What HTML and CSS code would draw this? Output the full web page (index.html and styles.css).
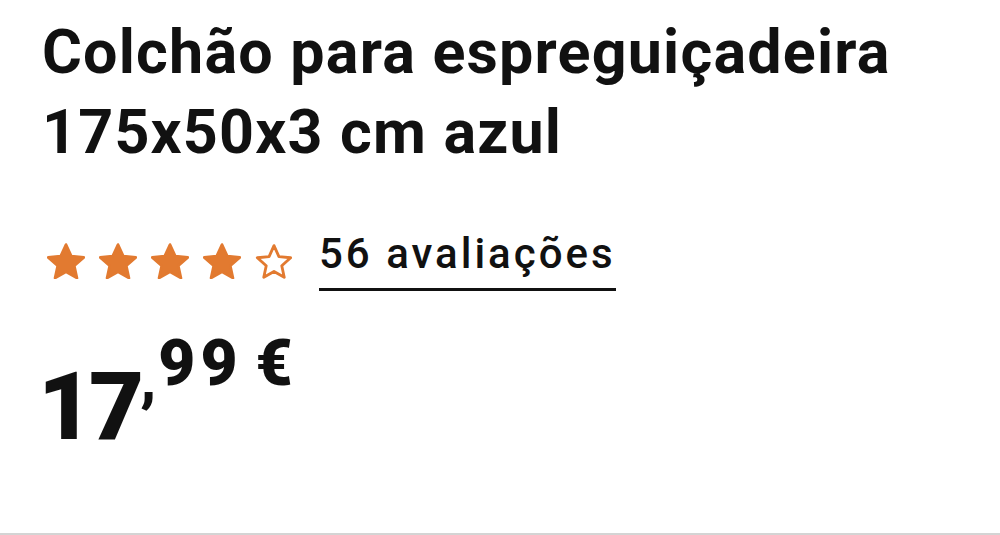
FILE: index.html
```html
<!DOCTYPE html>
<html lang="pt">
<head>
    <meta charset="UTF-8">
    <meta name="viewport" content="width=device-width, initial-scale=1.0">
    <title>Colchão para espreguiçadeira</title>
    <link rel="stylesheet" href="styles.css">
</head>
<body>
    <div class="product">
        <h1 class="title">Colchão para espreguiçadeira 175x50x3 cm azul</h1>

        <div class="rating">
            <div class="stars">
                <svg class="star" viewBox="2 2 20 19"><path class="full" d="M12 2.8l2.8 6.1 6.6.7-5 4.4 1.4 6.5L12 17.2l-5.8 3.3 1.4-6.5-5-4.4 6.6-.7z"/></svg>
                <svg class="star" viewBox="2 2 20 19"><path class="full" d="M12 2.8l2.8 6.1 6.6.7-5 4.4 1.4 6.5L12 17.2l-5.8 3.3 1.4-6.5-5-4.4 6.6-.7z"/></svg>
                <svg class="star" viewBox="2 2 20 19"><path class="full" d="M12 2.8l2.8 6.1 6.6.7-5 4.4 1.4 6.5L12 17.2l-5.8 3.3 1.4-6.5-5-4.4 6.6-.7z"/></svg>
                <svg class="star" viewBox="2 2 20 19"><path class="full" d="M12 2.8l2.8 6.1 6.6.7-5 4.4 1.4 6.5L12 17.2l-5.8 3.3 1.4-6.5-5-4.4 6.6-.7z"/></svg>
                <svg class="star" viewBox="2 2 20 19"><path class="empty" d="M12 3.4l2.6 5.8 6.2.6-4.7 4.2 1.3 6.1L12 17l-5.4 3.1 1.3-6.1-4.7-4.2 6.2-.6z"/></svg>
            </div>
            <a class="reviews" href="#">56 avaliações</a>
        </div>

        <div class="price">17<span class="sep">,</span><span class="cents">99 €</span></div>
    </div>
</body>
</html>
```

FILE: styles.css
```css
* {
    margin: 0;
    padding: 0;
    box-sizing: border-box;
}
body {
    background: #fff;
    color: #111;
    font-family: 'Roboto', 'Liberation Sans', sans-serif;
}
.product {
    height: 535px;
    padding: 12px 42px 0;
    border-bottom: 2px solid #d4d4d4;
}
.title {
    font-size: 61px;
    line-height: 80px;
    font-weight: 700;
    letter-spacing: 1.2px;
    max-width: 900px;
}
.rating {
    display: flex;
    align-items: center;
    margin-top: 58px;
}
.stars {
    display: flex;
    gap: 14px;
    margin-left: 5px;
}
.star {
    width: 38px;
    height: 36px;
}
.star .full {
    fill: #e27a30;
    stroke: #e27a30;
    stroke-width: 1.4;
    stroke-linejoin: round;
}
.star .empty {
    fill: none;
    stroke: #e27a30;
    stroke-width: 1.5;
    stroke-linejoin: round;
}
.reviews {
    display: inline-block;
    margin-left: 26px;
    font-size: 42px;
    line-height: 48px;
    font-weight: 500;
    letter-spacing: 3px;
    color: #111;
    text-decoration: none;
    padding-bottom: 10px;
    border-bottom: 3px solid #111;
}
.price {
    margin-top: 66px;
    margin-left: -4px;
    font-size: 95px;
    line-height: 100px;
    font-weight: 900;
    letter-spacing: -4px;
}
.sep {
    font-size: 60px;
    line-height: 0;
    vertical-align: 40px;
    letter-spacing: 2px;
}
.cents {
    font-size: 64px;
    line-height: 0;
    vertical-align: 54px;
    letter-spacing: 5px;
    word-spacing: -8px;
}
```
